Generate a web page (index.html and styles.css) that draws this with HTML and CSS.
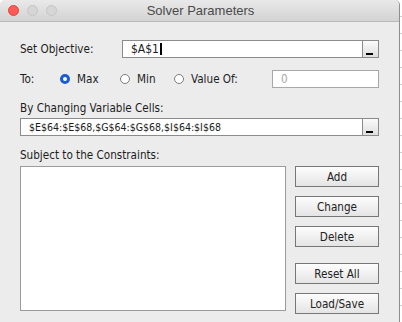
FILE: index.html
```html
<!DOCTYPE html>
<html lang="en">
<head>
    <meta charset="UTF-8">
    <title>Solver Parameters</title>
    <link rel="stylesheet" href="styles.css">
</head>
<body>
    <div class="window">
        <div class="titlebar">
            <div class="lights">
                <span class="light close"></span>
                <span class="light"></span>
                <span class="light"></span>
            </div>
            <div class="title">Solver Parameters</div>
        </div>

        <div class="content">
            <div class="row objective-row">
                <span class="row-label">Set Objective:</span>
                <div class="field ref-field">
                    <span class="field-text objective-text">$A$1<span class="caret"></span></span>
                    <span class="picker"></span>
                </div>
            </div>

            <div class="row to-row">
                <span class="to-label">To:</span>
                <span class="option option-max"><span class="radio checked"></span>Max</span>
                <span class="option option-min"><span class="radio"></span>Min</span>
                <span class="option option-value"><span class="radio"></span>Value Of:</span>
                <div class="field value-field">0</div>
            </div>

            <div class="section-label">By Changing Variable Cells:</div>
            <div class="field ref-field">
                <span class="field-text">$E$64:$E$68,$G$64:$G$68,$I$64:$I$68</span>
                <span class="picker"></span>
            </div>

            <div class="section-label constraints-label">Subject to the Constraints:</div>
            <div class="constraints">
                <div class="constraint-list"></div>
                <div class="side-buttons">
                    <button class="button">Add</button>
                    <button class="button">Change</button>
                    <button class="button">Delete</button>
                    <button class="button reset-button">Reset All</button>
                    <button class="button">Load/Save</button>
                </div>
            </div>
        </div>
    </div>
    <div class="sheet"></div>
</body>
</html>
```

FILE: styles.css
```css
/* Page */
body {
    margin: 0;
    padding: 0;
    display: flex;
    height: 322px;
    overflow: hidden;
    background: #ffffff;
    font-family: 'DejaVu Sans Condensed', 'DejaVu Sans', sans-serif;
    font-stretch: condensed;
    color: #1c1c1c;
}

/* Window */
.window {
    width: 399px;
    height: 322px;
    border-right: 1px solid #8e8e8e;
    border-top-left-radius: 5px;
    border-top-right-radius: 5px;
    background-color: #ececec;
    overflow: hidden;
    flex-shrink: 0;
}

.titlebar {
    position: relative;
    height: 21px;
    border-bottom: 1px solid #b9b9b9;
    background: linear-gradient(#e9e9e9, #d3d3d3);
    display: flex;
    align-items: center;
    justify-content: center;
}

.lights {
    position: absolute;
    left: 8px;
    top: 5px;
    display: flex;
    gap: 8px;
}

.light {
    width: 11px;
    height: 11px;
    border-radius: 50%;
    background-color: #d6d6d6;
    border: 0.5px solid #c4c4c4;
    box-sizing: border-box;
}

.light.close {
    background-color: #fc5c55;
    border-color: #e0443e;
}

.title {
    font-family: 'Liberation Sans', Arial, sans-serif;
    font-stretch: normal;
    font-size: 13px;
    color: #4a4a4a;
    margin-left: 2px;
}

/* Content */
.content {
    padding: 18px 20px 0 20px;
    font-size: 11.6px;
}

.row {
    display: flex;
    align-items: center;
}

.row-label {
    width: 102px;
}

.field {
    height: 16px;
    border: 1px solid #8b8b8b;
    background-color: #fff;
    display: flex;
    align-items: center;
    box-sizing: content-box;
}

.ref-field {
    flex: 1;
}

.field-text {
    flex: 1;
    padding-left: 8px;
    font-size: 10.5px;
    white-space: nowrap;
}

.objective-text {
    font-size: 12px;
    display: flex;
    align-items: center;
}

.caret {
    display: inline-block;
    width: 2px;
    height: 12px;
    margin-left: 1px;
    background-color: #000;
}

.picker {
    position: relative;
    width: 15px;
    height: 16px;
    border-left: 1px solid #8b8b8b;
    background: linear-gradient(#fbfbfb, #dedede);
}

.picker::after {
    content: '';
    position: absolute;
    left: 3px;
    bottom: 2px;
    width: 7px;
    height: 2px;
    background-color: #000;
}

/* Radio row */
.to-row {
    margin-top: 12px;
}

.to-label {
    width: 40px;
}

.option {
    display: flex;
    align-items: center;
    gap: 7px;
}

.option-max {
    width: 60px;
}

.option-min {
    width: 54px;
}

.option-value {
    width: 98px;
}

.radio {
    width: 10px;
    height: 10px;
    border-radius: 50%;
    border: 1px solid #7d7d7d;
    background-color: #fff;
    box-sizing: border-box;
}

.radio.checked {
    border: 3px solid #1b5bd3;
    background-color: #fff;
}

.value-field {
    flex: 1;
    border-color: #a8a8a8;
    padding-left: 8px;
    color: #a6a6a6;
    font-size: 11.6px;
}

/* Section labels */
.section-label {
    margin-top: 13px;
    margin-bottom: 3px;
    line-height: 14px;
}

.constraints-label {
    margin-top: 12px;
    margin-bottom: 4px;
}

/* Constraints */
.constraints {
    display: flex;
    align-items: flex-start;
}

.constraint-list {
    width: 265px;
    height: 143px;
    border: 1px solid #9b9b9b;
    background-color: #fff;
}

.side-buttons {
    margin-left: 9px;
    display: flex;
    flex-direction: column;
    gap: 9px;
}

.button {
    width: 84px;
    height: 21px;
    padding: 0;
    border: 1px solid #777;
    border-radius: 0;
    background: linear-gradient(#fdfdfd, #e4e4e4);
    font-family: inherit;
    font-stretch: condensed;
    font-size: 11.6px;
    color: #222;
}

.reset-button {
    margin-top: 7px;
}

/* Sheet behind the dialog */
.sheet {
    flex: 1;
    background: repeating-linear-gradient(#fff 0, #fff 16px, #cfcfcf 16px, #cfcfcf 17px);
}
```
